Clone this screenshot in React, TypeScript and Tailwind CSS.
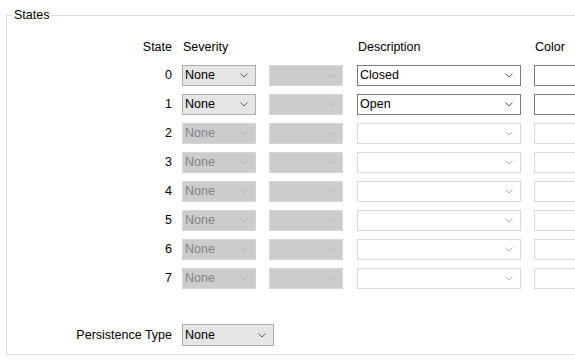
import React from 'react';

type Row = { state: number; enabled: boolean; description: string };

const rows: Row[] = [
  { state: 0, enabled: true, description: 'Closed' },
  { state: 1, enabled: true, description: 'Open' },
  { state: 2, enabled: false, description: '' },
  { state: 3, enabled: false, description: '' },
  { state: 4, enabled: false, description: '' },
  { state: 5, enabled: false, description: '' },
  { state: 6, enabled: false, description: '' },
  { state: 7, enabled: false, description: '' },
];

function Chevron({ light }: { light?: boolean }) {
  return (
    <svg width="8" height="5" viewBox="0 0 8 5" className="shrink-0">
      <polyline
        points="0.5,0.5 4,4 7.5,0.5"
        fill="none"
        stroke={light ? '#b4b4b4' : '#606060'}
        strokeWidth="1"
      />
    </svg>
  );
}

function Combo({
  value,
  width,
  variant,
}: {
  value?: string;
  width: string;
  variant: 'button' | 'disabled' | 'edit' | 'editDisabled';
}) {
  const styles = {
    button: 'bg-[#e5e5e5] border-[#adadad] text-black',
    disabled: 'bg-[#cccccc] border-[#d6d6d6] text-[#838383]',
    edit: 'bg-white border-[#7a7a7a] text-black',
    editDisabled: 'bg-white border-[#d9d9d9] text-[#838383]',
  }[variant];
  return (
    <div className={`${width} h-[21px] border flex items-center justify-between pl-[2px] pr-[7px] ${styles}`}>
      <span className="leading-none">{value}</span>
      <Chevron light={variant === 'disabled' || variant === 'editDisabled'} />
    </div>
  );
}

export default function App() {
  return (
    <div className="w-[575px] h-[361px] bg-white overflow-hidden text-[12.5px] text-black font-['Liberation_Sans',Arial,sans-serif]">
      <div className="relative ml-[6px] mt-[15px] w-[600px] h-[340px] border border-[#dcdcdc]">
        <span className="absolute left-[5px] top-[-8px] bg-white px-[2px] leading-[14px]">States</span>

        <div className="flex items-end h-[38px]">
          <div className="w-[165px] text-right leading-[14px]">State</div>
          <div className="ml-[11px] w-[175px] leading-[14px]">Severity</div>
          <div className="w-[177px] leading-[14px]">Description</div>
          <div className="leading-[14px]">Color</div>
        </div>

        <div className="mt-[11px] flex flex-col gap-[8px]">
          {rows.map((r) => (
            <div key={r.state} className="flex items-center">
              <div className="w-[165px] text-right">{r.state}</div>
              <div className="ml-[10px]">
                <Combo value="None" width="w-[74px]" variant={r.enabled ? 'button' : 'disabled'} />
              </div>
              <div className="ml-[13px]">
                <Combo width="w-[74px]" variant="disabled" />
              </div>
              <div className="ml-[14px]">
                <Combo value={r.description} width="w-[164px]" variant={r.enabled ? 'edit' : 'editDisabled'} />
              </div>
              <div
                className={`ml-[13px] w-[60px] h-[21px] border bg-white ${
                  r.enabled ? 'border-[#7a7a7a]' : 'border-[#d9d9d9]'
                }`}
              />
            </div>
          ))}
        </div>

        <div className="mt-[35px] flex items-center">
          <div className="w-[165px] text-right">Persistence Type</div>
          <div className="ml-[10px]">
            <div className="w-[92px] h-[22px] border border-[#adadad] bg-[#e5e5e5] flex items-center justify-between pl-[2px] pr-[7px]">
              <span className="leading-none">None</span>
              <Chevron />
            </div>
          </div>
        </div>
      </div>
    </div>
  );
}
